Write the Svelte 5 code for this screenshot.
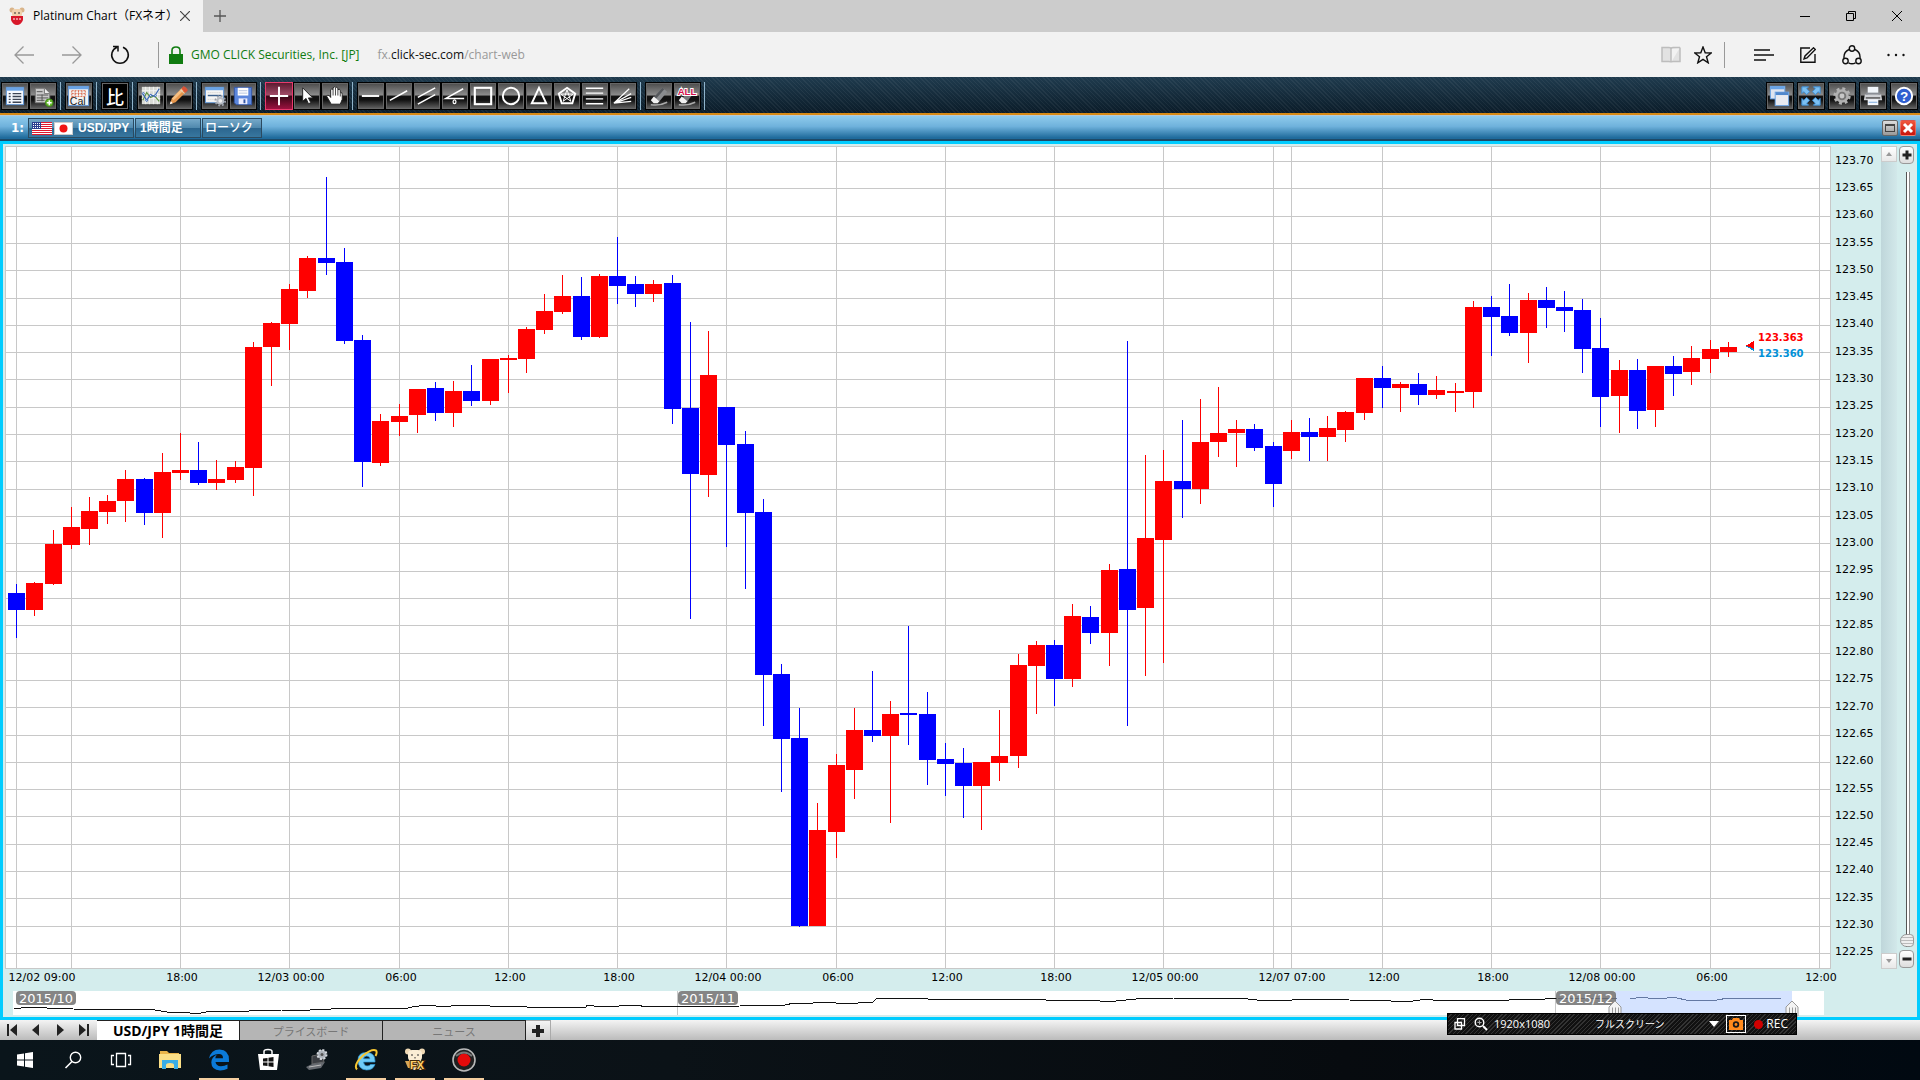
<script>
  // Each candle: direction (u = up, d = down), high, body top, body bottom, low
  const raw = `d 584 593 610 638|u 582 583 610 616|u 530 544 584 585|u 507 527 545 549|u 497 511 529 545|u 495 501 512 524|u 470 479 501 522|d 478 479 513 525|u 453 472 513 538|u 433 470 473 480|d 442 470 483 485|u 460 479 483 490|u 461 467 480 483|u 342 347 468 496|u 322 323 347 386|u 284 289 324 350|u 256 258 291 298|d 177 258 263 275|d 248 262 341 344|d 335 340 462 487|u 414 421 463 466|u 404 416 422 436|u 389 389 415 433|d 382 388 413 421|u 381 391 413 427|d 365 391 401 406|u 359 359 401 405|u 355 358 360 393|u 327 329 359 373|u 294 311 330 334|u 275 296 312 314|d 277 296 337 340|u 274 276 337 338|d 237 276 286 304|d 276 284 294 307|u 280 284 294 302|d 275 283 409 424|d 322 408 474 619|u 331 375 475 497|d 407 407 445 547|d 431 444 513 589|d 499 512 675 726|d 664 674 739 792|d 708 738 926 927|u 803 830 926 926|u 754 765 832 858|u 708 730 770 799|d 671 730 736 742|u 701 714 736 823|d 626 713 715 745|d 692 714 760 785|d 743 759 764 796|d 748 763 786 818|u 762 762 786 830|u 710 756 763 781|u 654 665 756 768|u 641 645 666 714|d 640 645 679 706|u 604 616 679 687|d 606 617 633 644|u 564 570 633 666|d 341 569 610 726|u 455 538 608 676|u 450 481 540 663|d 420 481 489 518|u 399 442 489 504|u 387 433 442 457|u 420 429 433 467|d 424 429 448 451|d 442 446 484 507|u 420 432 451 459|d 418 432 437 461|u 416 428 437 461|u 411 412 430 442|u 378 378 413 420|d 366 378 388 408|u 382 384 388 412|d 373 384 395 405|u 376 390 395 399|u 383 391 393 412|u 301 307 392 408|d 296 307 317 356|d 284 316 333 336|u 293 300 333 363|d 287 300 308 328|d 291 307 311 332|d 299 310 349 373|d 318 348 397 427|u 360 370 396 433|d 359 370 411 429|u 366 366 410 427|d 356 366 374 396|u 346 358 372 385|u 340 349 359 373|u 342 347 352 357`;
  const candles = raw.split('|').map((row, i) => {
    const [dir, high, top, bottom, low] = row.split(' ');
    return { x: Math.floor(16.6 + 18.21 * i), up: dir === 'u', high: +high, top: +top, bottom: +bottom, low: +low };
  });

  const prices = Array.from({ length: 30 }, (_, i) => (123.7 - i * 0.05).toFixed(2));
  const rowLine = (i) => Math.round(161 + i * 27.31);
  const columns = [16, 71, 180, 289, 399, 508, 617, 726, 836, 945, 1054, 1163, 1273, 1291, 1382, 1491, 1600, 1710, 1819];
  const times = [
    [42, '12/02 09:00'], [182, '18:00'], [291, '12/03 00:00'], [401, '06:00'], [510, '12:00'], [619, '18:00'],
    [728, '12/04 00:00'], [838, '06:00'], [947, '12:00'], [1056, '18:00'], [1165, '12/05 00:00'], [1292, '12/07 07:00'],
    [1384, '12:00'], [1493, '18:00'], [1602, '12/08 00:00'], [1712, '06:00'], [1821, '12:00']
  ];
  const history = '14,1009 29,1007 47,1008 67,1008 73,1009 127,1010 134,1009 155,1010 167,1012 184,1012 196,1014 206,1012 229,1011 249,1011 282,1010 290,1011 331,1009 359,1008 392,1009 408,1008 412,1007 427,1005 445,1007 457,1005 490,1006 506,1006 527,1007 580,1007 586,1007 587,1005 594,1006 600,1007 638,1005 645,1007 650,1006 661,1007 677,1006 689,1007 740,1006 750,1005 785,1005 794,1003 804,1004 823,1002 836,1003 858,1003 873,1002 877,998 890,999 897,998 919,998 928,999 944,999 976,999 995,1000 1014,999 1046,1000 1062,1001 1091,1000 1100,1001 1116,1001 1136,999 1174,998 1219,998 1238,998 1257,1000 1292,1000 1308,999 1333,999 1349,1000 1391,1001 1413,1001 1427,999 1433,1000 1493,1000 1500,1001 1518,999 1533,1000 1557,998';
  const recent = '1557,998 1617,999 1630,999 1642,997 1648,998 1667,998 1673,997 1690,1001 1703,1000 1717,1000 1728,998 1781,998';

  const doc = '<rect x="4.5" y="4.5" width="18" height="18" fill="#f4f8ff" stroke="#5b93d6"/><path d="M5 6.5H22" stroke="#6aa4e6" stroke-width="3"/>';
  const icons = {
    list: doc + '<path d="M7 11H9M11 11H20M7 14H9M11 14H20M7 17H9M11 17H20M7 20H9M11 20H20" stroke="#3c4454" stroke-width="1.4"/>',
    addDoc: '<path d="M5.5 5.5H15L20.5 11V20.5H5.5Z" fill="#c9c9c9" stroke="#777"/><path d="M15 5.5V11H20.5" fill="#eee" stroke="#777"/><path d="M7 9H13M7 12.5H19M7 15.5H19M7 18H15M12.5 12V19" stroke="#555"/><circle cx="20" cy="20.5" r="4" fill="#65b82e" stroke="#3d8617"/><path d="M20 18V23M17.5 20.5H22.5" stroke="#fff" stroke-width="1.5"/>',
    cal: '<rect x="2.5" y="3.5" width="21" height="20" fill="#f3f3f3" stroke="#5b93d6"/><path d="M3 5H23" stroke="#6aa4e6" stroke-width="3"/><path d="M6 8V17M9.5 8V14M13 8V14M16.5 8V14M20 8V14M6 8H20M6 11H20M6 14H20" stroke="#db6b4f" stroke-dasharray="2 1"/><text x="4" y="23" font-size="11" font-family="Liberation Sans" fill="#222">Cal</text>',
    indicator: '<rect x="4" y="4" width="19" height="18" fill="#d9dbd6"/><path d="M4 8H23M4 12H23M4 16H23M8 4V22M12 4V22M16 4V22M20 4V22" stroke="#f4f4f4"/><path d="M5 18 9 10 13 15 17 13 22 19" fill="none" stroke="#5f9440" stroke-width="1.2"/><path d="M5 11 9 18 13 12 17 14 22 6" fill="none" stroke="#3766b5" stroke-width="1.2"/><g fill="#fff" stroke="#3766b5"><circle cx="5.5" cy="11" r="1"/><circle cx="9" cy="18" r="1"/><circle cx="13" cy="13" r="1"/><circle cx="18" cy="13" r="1"/></g>',
    pencil: '<path d="M4 22 6 16 17 5 21 9 10 20Z" fill="#e5964c"/><path d="M6 16 17 5 19 7 8 18Z" fill="#f6c083"/><path d="M16 6 18 3.5Q19 3 21 5L22.5 7Q23 8 20 10Z" fill="#d95438"/><path d="M15 7 19 11" stroke="#ddd"/><path d="M4 22 5 19 7 21Z" fill="#fff"/>',
    panelGear: '<rect x="3.500" y="4.500" width="19" height="16" fill="#f4f4f4" stroke="#5b93d6"/><path d="M4 6H22" stroke="#6aa4e6" stroke-width="3"/><path d="M6 13H20" stroke="#3b5f8c" stroke-width="1.5"/><path d="M6 10H20M6 17H13" stroke="#ccc" stroke-dasharray="1 1"/><circle cx="19" cy="18.500" r="5" fill="none" stroke="#9aa0aa" stroke-width="2" stroke-dasharray="2 1.9"/><circle cx="19" cy="18.500" r="3" fill="#eee" stroke="#b5bac2" stroke-width="2"/>',
    save: '<path d="M4.5 4.5H22.5V22.5H6.5L4.5 20.5Z" fill="#5b86dc" stroke="#3457a5"/><rect x="8" y="5" width="11" height="8" fill="#fff"/><path d="M9 8H18M9 10.5H18" stroke="#b5c4df"/><rect x="9" y="16" width="9" height="6" fill="#eef"/><rect x="14" y="17" width="2" height="4" fill="#3457a5"/>',
    cross: '<path d="M13.5 4V23M4 13.5H23" stroke="#fff" stroke-width="2"/>',
    pointer: '<path d="M9 5V19L12.5 16 15 21.5 17.5 20.5 15 15.5H19.5Z" fill="#fff" stroke="#222"/>',
    hand: '<path d="M9 21 5 14Q5 12 7.5 13L9 15V7Q10.5 5 11.5 7V5Q13 3 14 5V5Q15.5 3 16.5 6V7Q18.5 5.5 19 8V10Q21 9 21 12V17L19 22H9Z" fill="#fff" stroke="#222"/><path d="M11.5 7V13M14 5V13M16.5 7V13M19 10V14" stroke="#444"/>',
    hline: '<path d="M4 13.5H22" stroke="#fff" stroke-width="2"/>',
    trend: '<path d="M4 18 22 8" stroke="#fff" stroke-width="1.6"/>',
    channel: '<path d="M4 15 22 5M4 22 22 12" stroke="#fff" stroke-width="1.6"/>',
    angle: '<path d="M22 6 4 16H23" fill="none" stroke="#fff" stroke-width="1.6"/><ellipse cx="13" cy="19.5" rx="1.5" ry="2" fill="none" stroke="#fff" stroke-width="1.3"/>',
    rect: '<rect x="5" y="5" width="17" height="17" fill="none" stroke="#fff" stroke-width="2.2"/>',
    circle: '<circle cx="13.5" cy="13.5" r="8.5" fill="none" stroke="#fff" stroke-width="2"/>',
    triangle: '<path d="M13.500 5 21 21H6Z" fill="none" stroke="#fff" stroke-width="2"/>',
    penta: '<path d="M13.5 5 22 11 19 21H8L5 11Z" fill="none" stroke="#fff" stroke-width="2"/><path d="M13.5 7 17.500 19 7 11.500H20L9.500 19Z" fill="none" stroke="#fff"/>',
    fibo: '<path d="M4 5.500H22M4 10.500H22M4 16.500H22M4 21.500H22" stroke="#fff" stroke-width="1.4"/>',
    fan: '<path d="M4 21 20 6M4 21 22 11M4 21 22 15M4 21 22 19" stroke="#fff" stroke-width="1.3"/>',
    eraser: '<path d="M8 15 17 5 22 9 14 19Z" fill="#8a8c8f"/><path d="M8 15 17 5 19 6.500 10 17Z" fill="#55585c"/><path d="M5 18 8 14 14 19 12 21H8Z" fill="#f2f2f2"/><path d="M5 22.500Q14 24 22 20" fill="none" stroke="#aaa" stroke-width="1.500"/>',
    eraseAll: '<path d="M8 16 16 8 20 11 14 19Z" fill="#77797c"/><path d="M5 18 8 14 14 19 12 21H8Z" fill="#f2f2f2"/><path d="M5 22.500Q14 24 22 20" fill="none" stroke="#aaa" stroke-width="1.500"/><text x="13.500" y="12" text-anchor="middle" font-size="10" font-weight="700" font-family="Liberation Sans" fill="#d5104c" stroke="#fff" stroke-width="2" paint-order="stroke">ALL</text>',
    windows: '<rect x="3.5" y="3.5" width="15" height="13" fill="#dfe4ee" stroke="#6aa4e6"/><path d="M4 5H18" stroke="#6aa4e6" stroke-width="3"/><rect x="8.5" y="9.5" width="14" height="14" fill="#e8eaf0" stroke="#6aa4e6"/><path d="M9 11H22" stroke="#4f87cc" stroke-width="3"/>',
    expand: '<g fill="#7cc0f2" stroke="#3e8fd4"><path d="M4 4H11L9 6 12 9 9 12 6 9 4 11Z"/><path d="M23 4H16L18 6 15 9 18 12 21 9 23 11Z"/><path d="M4 23H11L9 21 12 18 9 15 6 18 4 16Z"/><path d="M23 23H16L18 21 15 18 18 15 21 18 23 16Z"/></g>',
    gear: '<circle cx="13.5" cy="13.5" r="7" fill="#b2b2b2"/><circle cx="13.5" cy="13.5" r="7.5" fill="none" stroke="#b2b2b2" stroke-width="3" stroke-dasharray="3 2.9"/><circle cx="13.5" cy="13.5" r="4.5" fill="#777"/><circle cx="13.5" cy="13.5" r="2.5" fill="#c8c8c8"/>',
    print: '<rect x="8" y="4" width="11" height="8" fill="#f1f5fa"/><path d="M5 12H22L23 18H4Z" fill="#d0d2d6"/><path d="M6 11H21" stroke="#8b8f96" stroke-width="2"/><path d="M6 15.5H21" stroke="#555" stroke-width="1.5"/><rect x="8" y="17" width="11" height="6" fill="#f4f8fd"/><path d="M9 20H18" stroke="#79a8dc"/>',
    help: '<circle cx="13.5" cy="13.5" r="8.5" fill="#2f5fd0" stroke="#fff" stroke-width="2"/><text x="13.5" y="18.500" text-anchor="middle" font-size="14" font-weight="700" font-family="Liberation Sans" fill="#fff">?</text>'
  };
  const toolGroups = [
    ['list', 'addDoc'], ['cal'], ['compare'], ['indicator', 'pencil'], ['panelGear', 'save'], ['cross', 'pointer', 'hand'],
    ['hline', 'trend', 'channel', 'angle', 'rect', 'circle', 'triangle', 'penta', 'fibo', 'fan'], ['eraser', 'eraseAll']
  ];
  const rightTools = ['windows', 'expand', 'gear', 'print', 'help'];

  const taskIcons = [
    { name: 'Start', svg: '<path d="M4 6.5 11 5.5V11.5H4ZM12 5.3 20 4V11.5H12ZM4 12.5H11V18.5L4 17.5ZM12 12.5H20V20L12 18.7Z" fill="#fff"/>' },
    { name: 'Search', svg: '<circle cx="14.5" cy="9.5" r="5.2" fill="none" stroke="#fff" stroke-width="1.4"/><path d="M11 13.5 4.5 20" stroke="#fff" stroke-width="1.6"/>' },
    { name: 'Task view', svg: '<path d="M7.5 5.5H16.5V18.5H7.5ZM5 7.5H2.5V16.5H5M19 7.5H21.5V16.5H19" fill="none" stroke="#fff" stroke-width="1.3"/>' },
    { name: 'Explorer', svg: '<path d="M2 3H9L11 5H21V7H2Z" fill="#e9b44a"/><path d="M1 6H23V20H1Z" fill="#fbdf87"/><path d="M4 12H20V21H16V17Q16 15 12 15 8 15 8 17V21H4Z" fill="#3aaee8"/>' },
    { name: 'Edge', open: true, svg: '<path d="M2 10.5Q4 1.5 12.5 1.5 22 1.8 22 12V14H8.5Q9 18 14 18.3 17.5 18.3 20.5 16.5V20.8Q17 22.6 13 22.5 4.5 22 4.3 14.5 4.5 9 10 6.5 8.5 8 8.3 10.2H16Q16 6 12 6 6 6 2 10.5Z" fill="#0b7ad8"/>' },
    { name: 'Store', svg: '<path d="M8 6V3.5Q8 1.5 12 1.5T16 3.5V6" fill="none" stroke="#fff" stroke-width="1.5"/><path d="M2 6H23L21 22H4Z" fill="#fff"/><path d="M7 10.5 11.5 10V13.5H7ZM12.5 9.8 17.5 9V13.5H12.5ZM7 14.5H11.5V18L7 17.5ZM12.5 14.5H17.5V19L12.5 18.2Z" fill="#111"/>' },
    { name: 'Utility', svg: '<path d="M7 8 17 6 19 14 7 16Z" fill="#3a3d42" stroke="#666"/><path d="M1 19 7 16 20 14 16 20 4 22Z" fill="#666a70"/><path d="M4 19 16 17" stroke="#bbb"/><circle cx="17" cy="6.500" r="4.500" fill="#aab0b8" stroke="#d4d8dd" stroke-width="2" stroke-dasharray="2 1.5"/><circle cx="17" cy="6.500" r="1.5" fill="#555"/>' },
    { name: 'Internet Explorer', open: true, svg: '<path d="M4 12Q4 4.5 12.5 4.5 21 4.5 21 13V14H9.5Q10 18 13 18 15.5 18 16.5 16.5H21Q19 22 12.5 22 4 21.5 4 12ZM9.5 10.8H16Q15.5 8 12.8 8 10 8 9.5 10.8Z" fill="#6fcbf6" stroke="#2f9bd8" stroke-width=".7"/><path d="M3 21.5Q-1 17 9 7.5 18 .5 22 2.5 23.5 4 21.5 8" fill="none" stroke="#f6c632" stroke-width="2"/>' },
    { name: 'FX', open: true, svg: '<circle cx="5" cy="3.500" r="3" fill="#efd9b5"/><circle cx="19" cy="3.500" r="3" fill="#efd9b5"/><rect x="5" y="2" width="14" height="11" rx="4" fill="#fbeed5"/><path d="M9 6V8M15 6V8M12 9V10.500" stroke="#333"/><path d="M6 12H18L19 22H7Z" fill="#efd9b5"/><path d="M2 13H7L9 20H5Z" fill="#d8a858"/><text x="7" y="21" font-size="11" font-weight="700" font-family="Liberation Sans" fill="#ffd068" stroke="#40280a" stroke-width="2" paint-order="stroke">FX</text>' },
    { name: 'Recorder', open: true, svg: '<circle cx="12" cy="12" r="11" fill="#202020" stroke="#b9b9b9" stroke-width="1.6"/><circle cx="12" cy="12" r="6.5" fill="#e60a0a"/><path d="M4 8Q12 1 20 8" fill="none" stroke="#777" stroke-width="2"/>' }
  ];
</script>

<div class="screen">
  <header class="tabstrip">
    <div class="tab">
      <svg width="16" height="18" viewBox="0 0 16 18"><circle cx="3" cy="3" r="2.5" fill="#d9b48a"/><circle cx="13" cy="3" r="2.5" fill="#d9b48a"/><rect x="3" y="2" width="10" height="8" rx="3" fill="#f0d2ae"/><path d="M5 6H7M9 6H11" stroke="#333"/><path d="M2 9H14V13Q12 18 8 18T2 13Z" fill="#d8182a"/><path d="M4 12H12" stroke="#fff" stroke-dasharray="2 1"/></svg>
      <span class="tab-title">Platinum Chart（FXネオ）</span>
      <button class="plain tab-x" aria-label="Close tab"><svg width="10" height="10" viewBox="0 0 10 10"><path d="M0 0 10 10M10 0 0 10" stroke="#444" stroke-width="1.2" /></svg></button>
    </div>
    <button class="plain new-tab" aria-label="New tab"><svg width="12" height="12" viewBox="0 0 12 12"><path d="M6 0V12M0 6H12" stroke="#555" stroke-width="1.3" /></svg></button>
    <div class="window-buttons">
      <button class="plain" aria-label="Minimize"><svg width="10" height="10" viewBox="0 0 10 10"><path d="M0 5.5H10" stroke="#000" /></svg></button>
      <button class="plain" aria-label="Restore"><svg width="10" height="10" viewBox="0 0 10 10"><path d="M.5 2.5H7.5V9.5H.5ZM2.5 2.5V.5H9.5V7.5H7.5" fill="none" stroke="#000" /></svg></button>
      <button class="plain" aria-label="Close"><svg width="10" height="10" viewBox="0 0 10 10"><path d="M0 0 10 10M10 0 0 10" stroke="#000" /></svg></button>
    </div>
  </header>

  <nav class="address">
    <button class="plain arrow" aria-label="Back"><svg width="20" height="18" viewBox="0 0 20 18"><path d="M20 9H1M9.5 .5 1 9 9.5 17.5" fill="none" stroke="#999" stroke-width="1.3" /></svg></button>
    <button class="plain arrow" aria-label="Forward"><svg width="20" height="18" viewBox="0 0 20 18"><path d="M0 9H19M10.5 .5 19 9 10.5 17.5" fill="none" stroke="#999" stroke-width="1.3" /></svg></button>
    <button class="plain arrow" aria-label="Refresh"><svg width="20" height="20" viewBox="0 0 20 20"><path d="M13 2.3A8.3 8.3 0 1 1 7 2.3M3 1.5H8V6.5" fill="none" stroke="#111" stroke-width="1.5" /></svg></button>
    <i class="rule"></i>
    <svg class="lock" width="14" height="18" viewBox="0 0 14 18"><path d="M3 9V4.5Q3 1 7 1T11 4.5V9" fill="none" stroke="#107c10" stroke-width="1.6" /><rect y="8" width="14" height="10" fill="#107c10" /></svg>
    <span class="issuer">GMO CLICK Securities, Inc. [JP]</span>
    <span class="url">fx.<b>click-sec.com</b>/chart-web</span>
    <div class="browser-actions">
      <button class="plain" aria-label="Reading view"><svg width="20" height="18" viewBox="0 0 20 18"><path d="M1 1.500H8Q10 1.500 10 3V16.500Q10 15.500 8 15.500H1ZM19 1.500H12Q10 1.500 10 3M10 16.500Q10 15.500 12 15.500H19V1.500" fill="#e2e2e2" stroke="#bdbdbd" stroke-width="1.5" /></svg></button>
      <button class="plain" aria-label="Favorite"><svg width="18" height="18" viewBox="0 0 18 18"><path d="M9 1 11.2 6.7 17.3 7 12.5 10.8 14.2 16.8 9 13.4 3.8 16.8 5.5 10.8 .7 7 6.8 6.7Z" fill="none" stroke="#111" stroke-width="1.4" /></svg></button>
      <i class="rule"></i>
      <button class="plain wide" aria-label="Hub"><svg width="20" height="12" viewBox="0 0 20 12"><path d="M0 1H16M0 6H20M0 11H12" stroke="#111" stroke-width="1.3" /></svg></button>
      <button class="plain wide" aria-label="Web note"><svg width="16" height="16" viewBox="0 0 16 16"><path d="M10 1H.8V15.2H15V7M4 12 5 9 13.5 .8 15.3 2.5 7 11Z" fill="none" stroke="#111" stroke-width="1.4" /></svg></button>
      <button class="plain wide" aria-label="Share"><svg width="20" height="20" viewBox="0 0 20 20"><g fill="none" stroke="#111" stroke-width="1.4"><circle cx="10" cy="3.5" r="2.7" /><circle cx="3.5" cy="16" r="2.7" /><circle cx="16.5" cy="16" r="2.7" /><path d="M7 4.5Q1.5 7 2 13M13 4.5Q18.5 7 18 13M6.5 17.8Q10 19.8 13.5 17.8" /></g></svg></button>
      <button class="plain wide" aria-label="More"><svg width="18" height="4" viewBox="0 0 18 4"><g fill="#111"><circle cx="1.5" cy="2" r="1.2" /><circle cx="9" cy="2" r="1.2" /><circle cx="16.5" cy="2" r="1.2" /></g></svg></button>
    </div>
  </nav>

  <div class="toolbar">
    {#each toolGroups as group}
      <div class="group">
        {#each group as tool}
          {#if tool === 'compare'}
            <button class="tool dark">比</button>
          {:else}
            <button class="tool" class:active={tool === 'cross'} aria-label={tool}><svg width="26" height="26" viewBox="0 0 27 27">{@html icons[tool]}</svg></button>
          {/if}
        {/each}
      </div>
      <i class="sep"></i>
    {/each}
    <div class="group right">
      {#each rightTools as tool}
        <button class="tool" aria-label={tool}><svg width="26" height="26" viewBox="0 0 27 27">{@html icons[tool]}</svg></button>
      {/each}
    </div>
  </div>

  <div class="titlebar">
    <span class="index">1:</span>
    <button class="chip pair">
      <svg width="20" height="13" viewBox="0 0 20 13"><rect width="20" height="13" fill="#fff" /><path d="M0 .5H20M0 2.5H20M0 4.5H20M0 6.5H20M0 8.5H20M0 10.5H20M0 12.5H20" stroke="#e0182d" /><rect width="9" height="7" fill="#2c3f8f" /><path d="M1 1.5H9M1 3.5H9M1 5.5H9" stroke="#fff" stroke-dasharray="1 1" /></svg>
      <svg width="19" height="13" viewBox="0 0 19 13"><rect x=".5" y=".5" width="18" height="12" fill="#fff" stroke="#ccc" /><circle cx="9.5" cy="6.5" r="4" fill="#f01414" /></svg>
      <span>USD/JPY</span>
    </button>
    <button class="chip frame-chip">1時間足</button>
    <button class="chip type-chip">ローソク</button>
    <div class="title-buttons">
      <button class="mini" aria-label="Maximize"><svg width="14" height="14" viewBox="0 0 14 14"><rect x="2.5" y="3.5" width="9" height="7" fill="none" stroke="#444" /><path d="M2 4.5H12" stroke="#444" /></svg></button>
      <button class="mini red" aria-label="Close chart"><svg width="14" height="14" viewBox="0 0 14 14"><path d="M3 3 11 11M11 3 3 11" stroke="#fff" stroke-width="3" /></svg></button>
    </div>
  </div>

  <main class="frame">
    <div class="chart-row">
      <svg class="plot" viewBox="5 146 1826 823" preserveAspectRatio="none" shape-rendering="crispEdges">
        <rect x="5.5" y="146.5" width="1825" height="822" fill="#fff" stroke="#c8c8c8" />
        <g fill="#c8c8c8">
          {#each prices as _, i}<rect x="5" y={rowLine(i)} width="1826" height="1" />{/each}
          {#each columns as x}<rect {x} y="146" width="1" height="823" />{/each}
        </g>
        {#each candles as c}
          <g fill={c.up ? '#ff0000' : '#0000ff'}>
            <rect x={c.x} y={c.high} width="1" height={c.low - c.high} />
            <rect x={c.x - 8} y={c.top} width="17" height={c.bottom - c.top} />
          </g>
        {/each}
        <path d="M1746 346.5 1754 342V351Z" fill="#0091d8" />
        <path d="M1746 345.5 1754 341V349Z" fill="#ff0000" />
        <text class="quote ask" x="1758" y="341">123.363</text>
        <text class="quote bid" x="1758" y="357">123.360</text>
      </svg>
      <div class="price-axis">
        {#each prices as price}<span>{price}</span>{/each}
      </div>
      <div class="scroll">
        <button class="step" aria-label="Scroll up"><svg width="6" height="4" viewBox="0 0 6 4"><path d="M3 0 6 4H0Z" fill="#999" /></svg></button>
        <button class="step" aria-label="Scroll down"><svg width="6" height="4" viewBox="0 0 6 4"><path d="M3 4 6 0H0Z" fill="#999" /></svg></button>
      </div>
      <div class="zoom">
        <button class="zoom-button" aria-label="Zoom in"><svg width="10" height="10" viewBox="0 0 10 10"><path d="M5 .5V9.5M.5 5H9.5" stroke="#222" stroke-width="3" /></svg></button>
        <input class="zoom-slider" type="range" min="0" max="100" value="100" aria-label="Vertical zoom" />
        <button class="zoom-button" aria-label="Zoom out"><svg width="10" height="10" viewBox="0 0 10 10"><path d="M.5 5H9.5" stroke="#222" stroke-width="3" /></svg></button>
      </div>
    </div>
    <div class="time-axis">
      {#each times as [x, label]}<span style="left: {(x - 5) / 19.12}%">{label}</span>{/each}
    </div>
    <svg class="history" viewBox="5 991 1912 24" preserveAspectRatio="none">
      <rect x="13" y="991" width="1811" height="24" fill="#fff" />
      <rect x="1615" y="991" width="177" height="24" fill="#d5e3ff" />
      <path d="M677.5 991V1015M1555.5 991V1015" stroke="#c8c8c8" />
      <polyline points={history} fill="none" stroke="#111" shape-rendering="crispEdges" />
      <polyline points={recent} fill="none" stroke="#6479a3" shape-rendering="crispEdges" />
      {#each [[16, '2015/10'], [678, '2015/11'], [1556, '2015/12']] as [x, label]}
        <rect {x} y="991" width="60" height="14" rx="4" fill="#666" fill-opacity=".8" />
        <text class="month" x={x + 30} y="1003">{label}</text>
      {/each}
      {#each [1609, 1786] as x}
        <path d="M{x} 1016V1007L{x + 6} 1001 {x + 12} 1007V1016Z" fill="#f3f3f3" stroke="#999" />
        <path d="M{x + 3.5} 1007.5V1014M{x + 6.5} 1007.5V1014M{x + 9.5} 1007.5V1014" stroke="#999" />
      {/each}
    </svg>
  </main>

  <footer class="sheets">
    <div class="sheet-nav">
      <button class="plain" aria-label="First"><svg width="12" height="12" viewBox="0 0 12 12"><path d="M1 0H3V12H1ZM11 0V12L4 6Z" fill="#222" /></svg></button>
      <button class="plain" aria-label="Previous"><svg width="12" height="12" viewBox="0 0 12 12"><path d="M9 0V12L2 6Z" fill="#222" /></svg></button>
      <button class="plain" aria-label="Next"><svg width="12" height="12" viewBox="0 0 12 12"><path d="M3 0V12L10 6Z" fill="#222" /></svg></button>
      <button class="plain" aria-label="Last"><svg width="12" height="12" viewBox="0 0 12 12"><path d="M9 0H11V12H9ZM1 0V12L8 6Z" fill="#222" /></svg></button>
    </div>
    <button class="sheet current">USD/JPY 1時間足</button>
    <button class="sheet">プライスボード</button>
    <button class="sheet">ニュース</button>
    <button class="sheet add" aria-label="Add sheet"><svg width="12" height="12" viewBox="0 0 12 12"><path d="M6 0V12M0 6H12" stroke="#222" stroke-width="4" /></svg></button>
  </footer>

  <div class="taskbar">
    {#each taskIcons as item}
      <button class="task" class:open={item.open} aria-label={item.name}><svg width="24" height="24" viewBox="0 0 24 24">{@html item.svg}</svg></button>
    {/each}
  </div>

  <div class="recorder">
    <svg width="12" height="12" viewBox="0 0 12 12"><path d="M3.5 .5H10.5V7.5H3.5ZM1 4.5H7.5V11H1Z" fill="none" stroke="#fff" stroke-width="1.3" /></svg>
    <svg width="14" height="14" viewBox="0 0 14 14"><circle cx="5.5" cy="5.5" r="4.3" fill="none" stroke="#fff" stroke-width="1.4" /><path d="M9 9 13 13" stroke="#fff" stroke-width="2" /><path d="M3.5 5.5H7.5M5.5 3.5V7.5" stroke="#aaa" /></svg>
    <span class="size">1920x1080</span>
    <span class="mode">フルスクリーン</span>
    <svg width="10" height="6" viewBox="0 0 10 6"><path d="M0 0H10L5 6Z" fill="#fff" /></svg>
    <button class="plain camera" aria-label="Screenshot"><svg width="14" height="12" viewBox="0 0 14 12"><path d="M0 2H3L4 0H10L11 2H14V12H0Z" fill="#ff8a1c" /><circle cx="7" cy="6.5" r="3.2" fill="#1a1a1a" /><circle cx="7" cy="6.5" r="1.4" fill="#ff8a1c" /></svg></button>
    <button class="plain rec"><i></i>REC</button>
  </div>
</div>

<style>
  :global(body) {
    margin: 0;
  }
  .screen {
    position: relative;
    display: flex;
    flex-direction: column;
    height: 100vh;
    overflow: hidden;
    font: 12px/16px 'Open Sans', 'Noto Sans CJK JP', sans-serif;
    color: #000;
  }
  .screen > * {
    flex: none;
    box-sizing: border-box;
  }
  svg {
    display: block;
    flex: none;
  }
  button {
    box-sizing: border-box;
    margin: 0;
    padding: 0;
    border: 0;
    font: inherit;
    color: inherit;
    display: flex;
    align-items: center;
    justify-content: center;
    white-space: nowrap;
  }
  .plain {
    background: none;
  }

  .tabstrip {
    height: 32px;
    display: flex;
    background: #ccc;
  }
  .tab {
    box-sizing: border-box;
    min-width: 200px;
    padding: 0 13px 0 9px;
    display: flex;
    align-items: center;
    gap: 8px;
    background: #f2f2f2;
  }
  .tab-title {
    white-space: nowrap;
    margin-right: -6px;
  }
  .tab-x {
    margin-left: auto;
  }
  .new-tab {
    width: 34px;
  }
  .window-buttons {
    margin-left: auto;
    padding-bottom: 1px;
    display: flex;
  }
  .window-buttons button {
    width: 46px;
  }

  .address {
    height: 45px;
    display: flex;
    align-items: center;
    background: #f2f2f2;
    white-space: nowrap;
  }
  .arrow {
    width: 48px;
  }
  .rule {
    width: 1px;
    height: 26px;
    background: #999;
  }
  .address > .rule {
    margin: 0 10px 0 14px;
  }
  .issuer {
    margin: 0 18px 0 8px;
    color: #107c10;
  }
  .url {
    color: #999;
  }
  .url b {
    font-weight: 400;
    color: #111;
  }
  .browser-actions {
    margin-left: auto;
    padding-right: 2px;
    display: flex;
    align-items: center;
  }
  .browser-actions button {
    width: 32px;
    height: 32px;
  }
  .browser-actions .rule {
    margin: 0 17px 0 5px;
  }
  .browser-actions .wide {
    width: 44px;
  }

  .toolbar {
    height: 38px;
    padding: 5px 2px 0 1px;
    display: flex;
    border-bottom: 2px solid #d88a14;
    background: repeating-linear-gradient(45deg, #ffffff0d 0 1px, transparent 1px 3px), linear-gradient(#1f3b4e, #0b1c29);
  }
  .group {
    display: flex;
  }
  .sep {
    width: 1px;
    height: 28px;
    margin: 0 4px 0 3px;
    background: #8fb4cc;
  }
  .tool {
    width: 28px;
    height: 28px;
    border: 1px solid #000;
    box-shadow: inset 0 0 0 1px #666;
    background: linear-gradient(#4a4a4a, #8a8a8a 45%, #111 52%, #111 65%, #666);
  }
  .tool.active {
    border-color: #e83a6c;
    box-shadow: none;
    background: linear-gradient(#5c1a30, #a04a66 45%, #3a0616 52%, #9c1240);
  }
  .tool.dark {
    background: #000;
    color: #fff;
    font: 500 18px/24px 'Noto Sans CJK JP', sans-serif;
  }
  .right {
    margin-left: auto;
    gap: 3px;
  }

  .titlebar {
    height: 26px;
    padding: 2px 4px 1px 11px;
    display: flex;
    align-items: center;
    border-top: 1px solid #b5c8d6;
    border-bottom: 2px solid #1d4a68;
    background: linear-gradient(#8fcbec, #6fb2dc 45%, #1f6b9c 95%);
    color: #fff;
    font-weight: 700;
  }
  .index {
    width: 17px;
    font: 700 12px/16px 'DejaVu Sans', sans-serif;
  }
  .chip {
    height: 20px;
    margin-right: 1px;
    padding-left: 4px;
    justify-content: flex-start;
    border: 1px solid #2b4a60;
    background: linear-gradient(#76a9c9, #4f88ad 50%, #2c668f 52%, #38779f);
    font: 700 12px/16px 'Liberation Sans', 'Noto Sans CJK JP', sans-serif;
  }
  .pair {
    width: 106px;
    padding-left: 3px;
    gap: 2px;
  }
  .pair span {
    margin-left: 3px;
  }
  .frame-chip {
    width: 66px;
  }
  .type-chip {
    width: 60px;
    padding-left: 2px;
    font-weight: 500;
  }
  .title-buttons {
    margin-left: auto;
    display: flex;
    gap: 2px;
  }
  .mini {
    width: 16px;
    height: 16px;
    border: 1px solid #666;
    border-radius: 2px;
    background: linear-gradient(#ddd, #999);
  }
  .mini.red {
    border-color: #fff4;
    background: linear-gradient(#f0563c, #c8140c);
  }

  .screen > .frame {
    flex: 1;
    min-height: 0;
    padding: 2px 0 2px 2px;
    display: flex;
    flex-direction: column;
    border: 3px solid #00ccff;
    background: #d4eded;
  }
  .chart-row {
    flex: 1;
    min-height: 0;
    display: flex;
  }
  .plot {
    flex: 1;
    min-width: 0;
    height: 100%;
  }
  .quote {
    font: 700 10px 'DejaVu Sans', sans-serif;
  }
  .ask {
    fill: #ff0000;
  }
  .bid {
    fill: #0091d8;
  }
  .price-axis {
    box-sizing: border-box;
    width: 50px;
    padding: 1px 0 3px 4px;
    display: grid;
    grid-auto-rows: 1fr;
    align-items: center;
    font: 11px/14px 'DejaVu Sans', sans-serif;
  }
  .scroll {
    width: 16px;
    display: flex;
    flex-direction: column;
    justify-content: space-between;
    background: linear-gradient(90deg, #bfd6da, #d2e8ea);
  }
  .step {
    width: 16px;
    height: 16px;
    border: 1px solid #ccc;
    background: linear-gradient(#fff, #e8e8e8);
  }
  .zoom {
    width: 20px;
    padding: 0 1px 1px 0;
    box-sizing: border-box;
    display: flex;
    flex-direction: column;
    align-items: center;
  }
  .zoom-button {
    width: 15px;
    height: 18px;
    border: 1px solid #999;
    border-radius: 4px;
    background: linear-gradient(#fff, #ddd);
  }
  .zoom-slider {
    flex: 1;
    min-height: 0;
    width: 14px;
    margin: 8px 0 3px;
    appearance: none;
    writing-mode: vertical-lr;
    background: linear-gradient(90deg, transparent 6px, #555 6px 7px, #fff 7px 9px, #888 9px 10px, transparent 10px);
  }
  .zoom-slider::-webkit-slider-thumb {
    appearance: none;
    width: 14px;
    height: 13px;
    background: repeating-linear-gradient(#eee 0 2px, #bbb 2px 3px);
    border: 1px solid #999;
    border-radius: 7px 4px 4px 7px;
  }
  .time-axis {
    position: relative;
    height: 22px;
    font: 11px/18px 'DejaVu Sans', sans-serif;
  }
  .time-axis span {
    position: absolute;
    transform: translateX(-50%);
    white-space: nowrap;
  }
  .history {
    width: 100%;
    height: 24px;
    overflow: visible;
  }
  .month {
    font: 13px 'DejaVu Sans', sans-serif;
    fill: #fff;
    text-anchor: middle;
  }

  .sheets {
    height: 20px;
    display: flex;
    background: linear-gradient(#f4f4f4, #bbb);
  }
  .sheet-nav {
    box-sizing: border-box;
    width: 97px;
    display: flex;
  }
  .sheet-nav button {
    width: 24px;
  }
  .sheet {
    width: 143px;
    border: solid #222;
    border-width: 1px 1px 0 0;
    background: #b5b5b5;
    color: #777;
    font: 11px/16px 'Noto Sans CJK JP', sans-serif;
  }
  .sheet.current {
    background: #fff;
    color: #000;
    font: 700 14px/16px 'Open Sans', 'Noto Sans CJK JP', sans-serif;
  }
  .sheet.add {
    width: 25px;
    border-color: #aaa;
    background: linear-gradient(#f4f4f4, #ccc);
  }

  .taskbar {
    height: 40px;
    padding-left: 1px;
    display: flex;
    background: linear-gradient(90deg, #0a151b, #0b1217 35%, #070b0f 70%, #010911);
  }
  .task {
    width: 49px;
    background: linear-gradient(#f5cfa0, #f5cfa0) center bottom / 0 2px no-repeat;
  }
  .task:nth-child(-n + 3) {
    width: 48px;
  }
  .task.open {
    background-size: 40px 2px;
  }

  .recorder {
    position: absolute;
    right: 123px;
    bottom: 45px;
    width: 350px;
    height: 22px;
    padding: 0 8px 0 6px;
    display: flex;
    align-items: center;
    border: 1px solid #000;
    background: repeating-linear-gradient(135deg, #111 0 2px, #333 2px 3px);
    color: #fff;
  }
  .size {
    margin-left: 6px;
    font-size: 11px;
  }
  .recorder svg + svg {
    margin-left: 8px;
  }
  .mode {
    flex: 1;
    text-align: center;
    font-size: 10px;
  }
  .camera {
    width: 20px;
    height: 18px;
    margin: 0 8px 0 7px;
    border: 1px solid #fff;
  }
  .rec {
    gap: 3px;
  }
  .rec i {
    width: 9px;
    height: 9px;
    border-radius: 50%;
    background: #d00000;
  }
</style>
